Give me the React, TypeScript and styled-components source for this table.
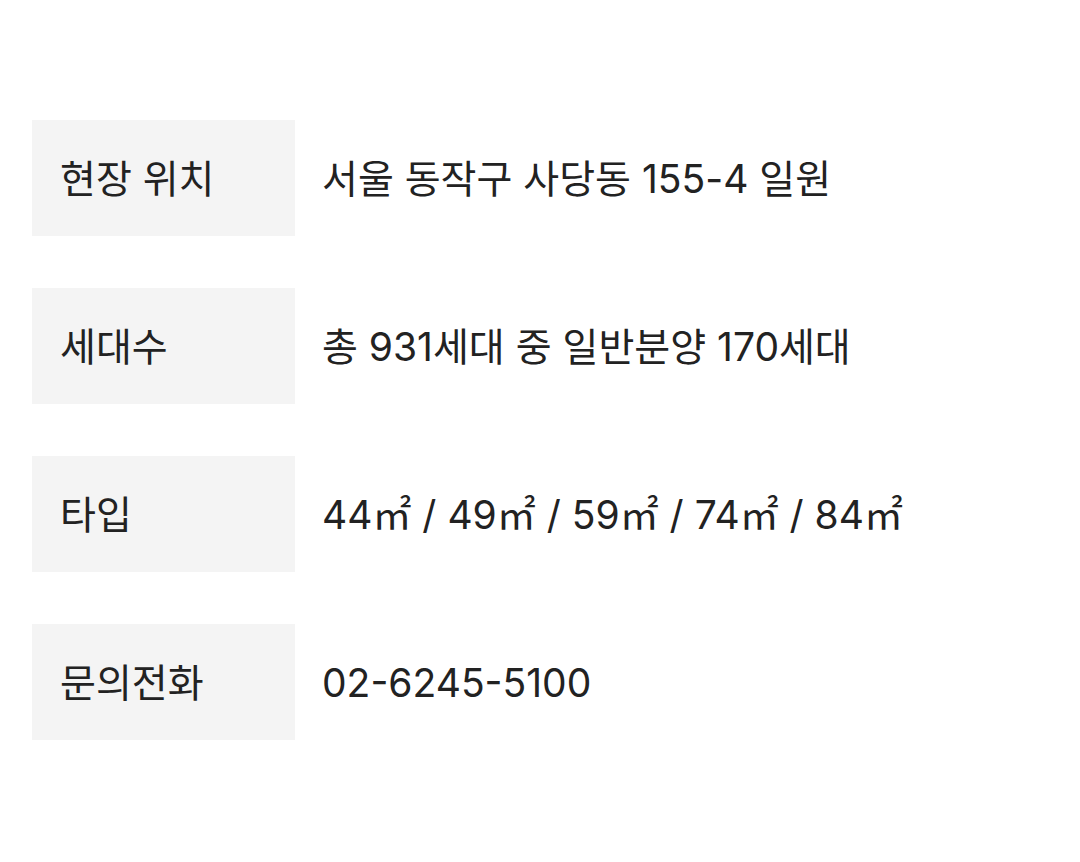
import styled, { createGlobalStyle } from "styled-components";

const GlobalStyle = createGlobalStyle`
  body {
    margin: 0;
    background: #ffffff;
    font-family: Inter, "Noto Sans CJK KR", "Noto Sans", sans-serif;
    color: #222222;
  }
`;

const infoList = [
  { label: "현장 위치", value: "서울 동작구 사당동 155-4 일원" },
  { label: "세대수", value: "총 931세대 중 일반분양 170세대" },
  { label: "타입", value: "44㎡ / 49㎡ / 59㎡ / 74㎡ / 84㎡" },
  { label: "문의전화", value: "02-6245-5100" },
];

function App() {
  return (
    <>
      <GlobalStyle />
      <InfoStyle>
        {infoList.map((item) => (
          <dl key={item.label}>
            <dt>{item.label}</dt>
            <dd>{item.value}</dd>
          </dl>
        ))}
      </InfoStyle>
    </>
  );
}

const InfoStyle = styled.div`
  display: flex;
  flex-direction: column;
  gap: 52px;
  padding: 120px 32px 0 32px;

  dl {
    display: flex;
    align-items: center;
    margin: 0;
    font-size: 39px;
    line-height: 1;

    dt {
      display: flex;
      align-items: center;
      box-sizing: border-box;
      width: 263px;
      height: 116px;
      padding: 0 0 0 28px;
      background: #f4f4f4;
    }
    dd {
      margin: 0 0 0 27px;
    }
  }
`;

export default App;
